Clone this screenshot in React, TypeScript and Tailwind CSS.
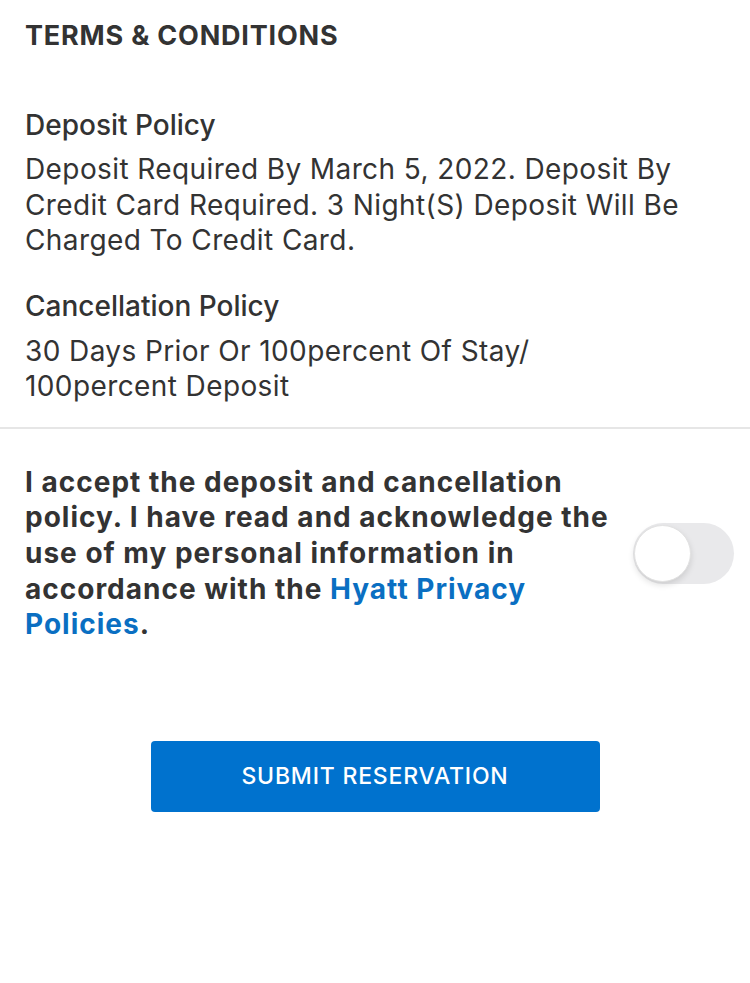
import { useState } from 'react';

export default function App() {
  const [accepted, setAccepted] = useState(false);

  return (
    <div className="min-h-[983px] w-[750px] bg-white font-['Inter',sans-serif] text-[#333333]">
      <section className="px-[25px] pt-[20px]">
        <h1 className="text-[27px] font-bold leading-[32px] tracking-[0.8px] text-[#333333]">
          TERMS &amp; CONDITIONS
        </h1>

        <div className="mt-[56px]">
          <h2 className="text-[28px] font-medium leading-[34px]">Deposit Policy</h2>
          <p className="mt-[10px] text-[28px] leading-[35.5px] tracking-[0.4px]">
            Deposit Required By March 5, 2022. Deposit By Credit Card Required. 3 Night(S) Deposit Will Be
            Charged To Credit Card.
          </p>
        </div>

        <div className="mt-[30px]">
          <h2 className="text-[28px] font-medium leading-[34px]">Cancellation Policy</h2>
          <p className="mt-[11px] text-[28px] leading-[35.5px] tracking-[0.4px]">
            30 Days Prior Or 100percent Of Stay/
            <br />
            100percent Deposit
          </p>
        </div>
      </section>

      <hr className="mt-[22px] h-[2px] border-0 bg-[#e6e6e6]" />

      <section className="flex items-center px-[25px] pt-[36px]">
        <p className="w-[600px] text-[28px] font-bold leading-[35.7px] tracking-[1px] text-[#333333]">
          I accept the deposit and cancellation policy. I have read and acknowledge the use of my personal
          information in accordance with the <a href="#" className="text-[#0a6fc2]">Hyatt Privacy Policies</a>.
        </p>
        <button
          type="button"
          onClick={() => setAccepted(!accepted)}
          className={`relative ml-auto mr-[-9px] h-[61px] w-[101px] shrink-0 rounded-full transition-colors ${
            accepted ? 'bg-[#34c759]' : 'bg-[#e9e9eb]'
          }`}
        >
          <span
            className={`absolute top-[2px] h-[57px] w-[57px] rounded-full border border-[#e2e2e2] bg-white shadow-[0_3px_6px_rgba(0,0,0,0.12)] transition-all ${
              accepted ? 'left-[42px]' : 'left-[1px]'
            }`}
          />
        </button>
      </section>

      <div className="flex justify-center pt-[98px]">
        <button
          type="button"
          className="h-[71px] w-[449px] rounded-[4px] bg-[#0072ce] text-[23px] font-medium tracking-[0.8px] text-white"
        >
          SUBMIT RESERVATION
        </button>
      </div>
    </div>
  );
}
